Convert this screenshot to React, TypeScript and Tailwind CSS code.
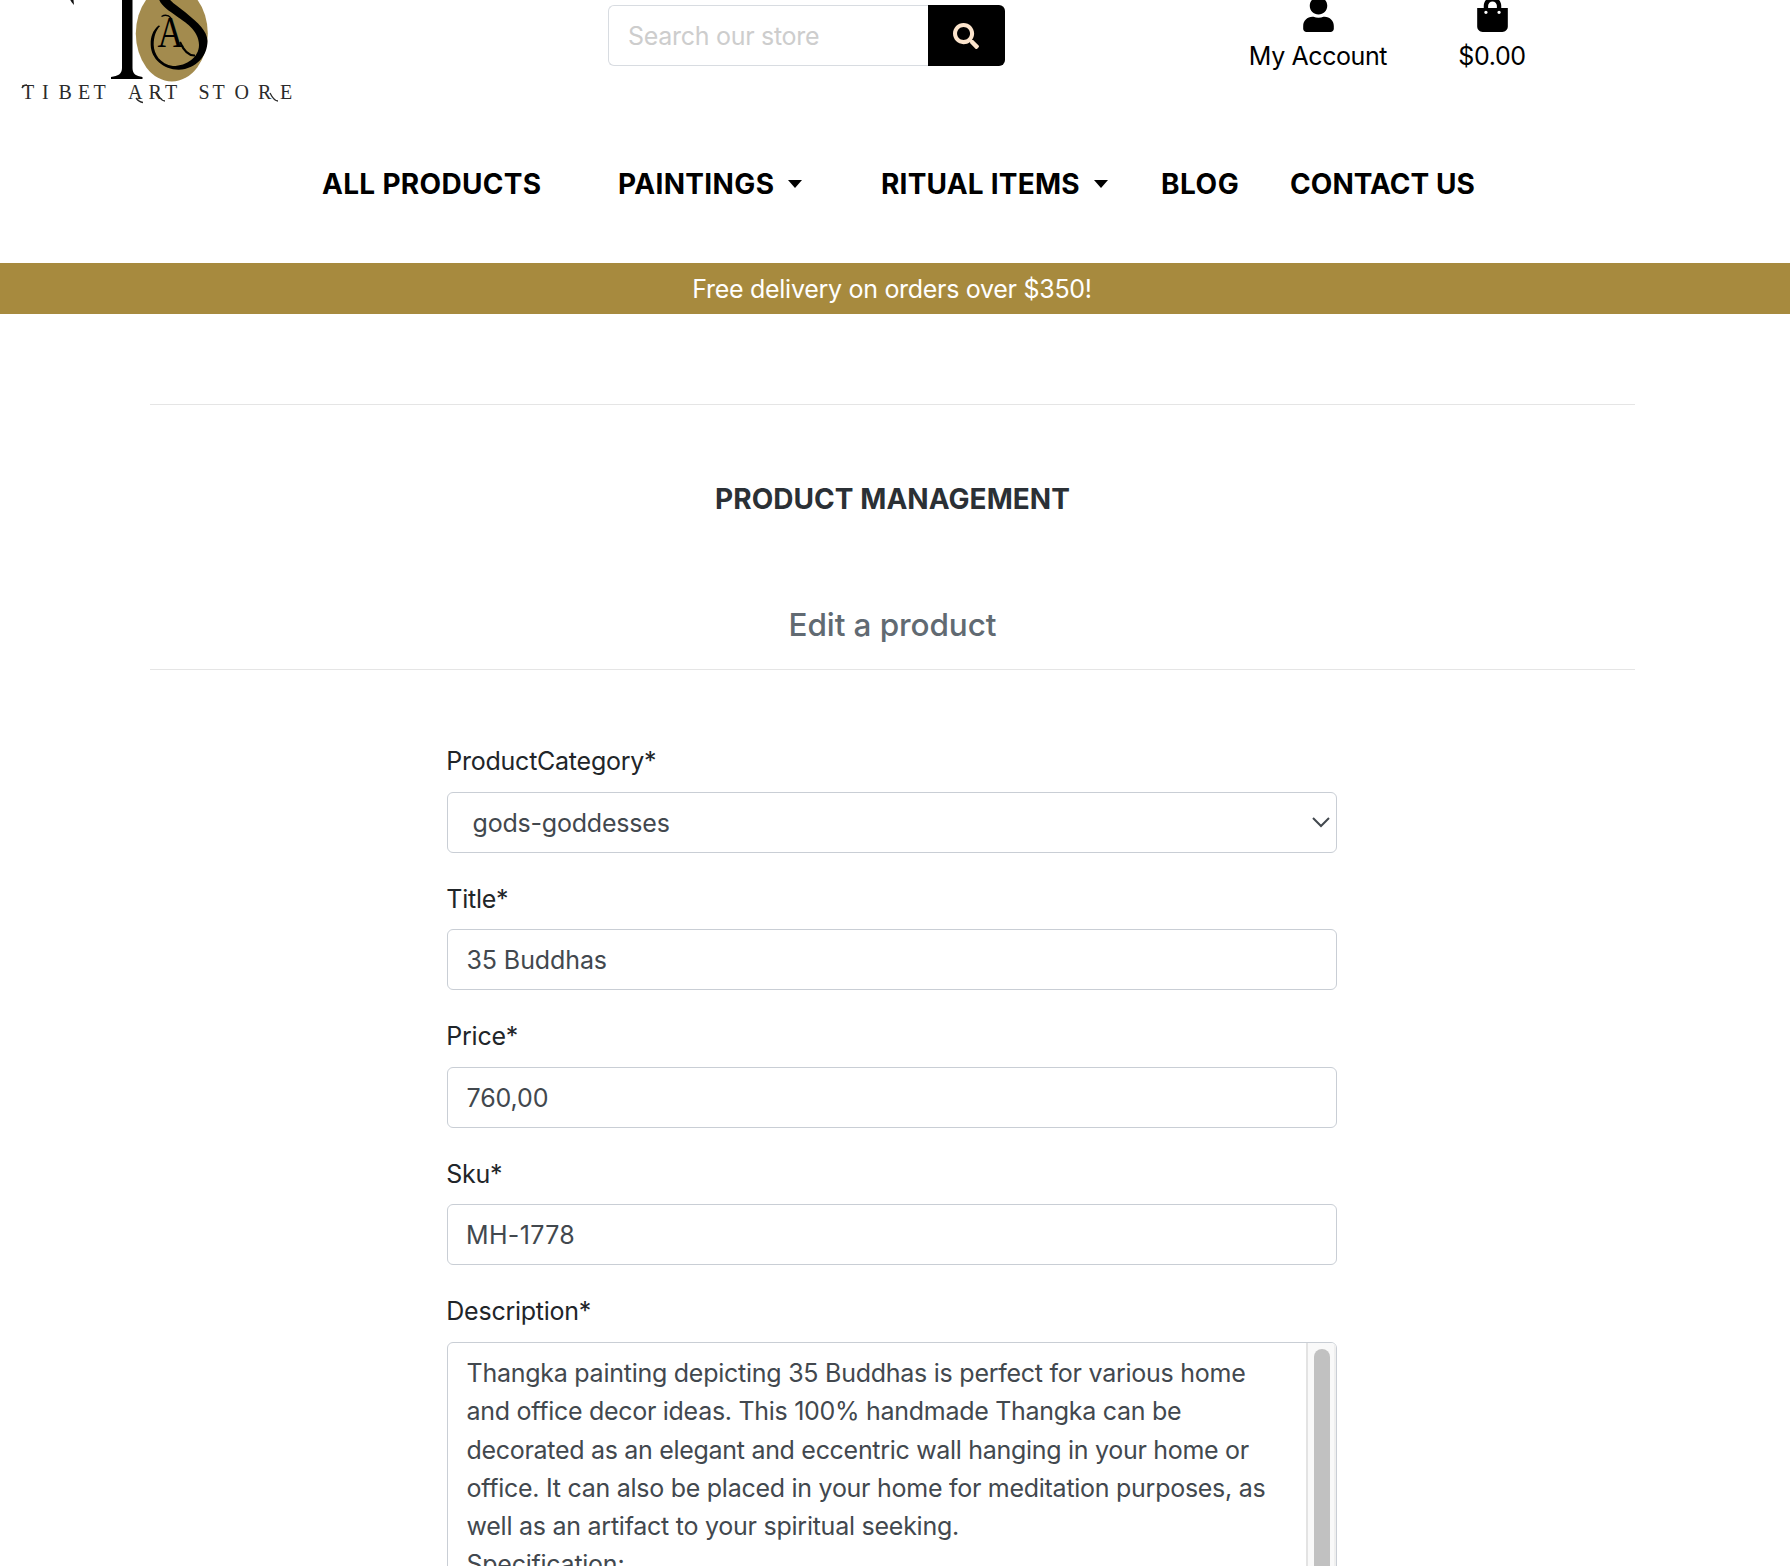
import React from 'react';
import { FaSearch, FaShoppingBag, FaUser } from 'react-icons/fa';

const wordmark = 'TIBET ART STORE';
const wordmarkX = '22 42 58.5 78 93.5 110 128 148.5 165 182 198.5 212.5 234.5 258 280';

function Logo() {
  return (
    <svg width="320" height="112" viewBox="0 0 320 112" className="block shrink-0" fontFamily="Liberation Serif, serif">
      <ellipse cx="171.8" cy="33.5" rx="36" ry="48" fill="#a38b4e" />
      {/* ornamental column with its base and upper finial */}
      <path d="M69 -2 C71 1 72 3 74 5 L73.5 0 L73 -2 Z" fill="#111" />
      <path d="M122 -2 H132.5 V68 C132.5 74 136 76 142.5 77 V79 H111 V77 C118 76 122 74 122 68 Z" fill="#000" />
      {/* swash crossing the golden oval */}
      <path
        d="M158.5 -2 C161 6 168 10 177 16.5 C184 21.5 199 30 199 45 C199 57 187 66 173 66 C160 64 154 54 153.7 45 C153.6 37 156 30 160.2 26 L158.5 25.5 C152 31 150.5 38 150.7 45 C151 59 164 70 179 69.7 C196 69 207.5 56 207.5 41 C207 31 199 23.5 185 12 C179 7 173 4 168.5 -2 Z"
        fill="#000"
      />
      <text transform="translate(157.5 46.5) scale(0.82 1)" fontSize="44" fill="#000">
        A
      </text>
      <path d="M161.5 16.5 Q167 13.5 171 18" fill="none" stroke="#000" strokeWidth="1.4" />
      <path d="M180 42 Q186 56 195 55.5" fill="none" stroke="#000" strokeWidth="2" />
      <text x={wordmarkX} y="98.5" fontSize="20" fill="#2b2b2b">
        {wordmark}
      </text>
      <path
        d="M136 98 q3 4 7 4.5 M157 93 q4 8 8 8 M270 93 q4 8 8 8 M22 88 q1 -3 5 -3"
        fill="none"
        stroke="#2b2b2b"
        strokeWidth="1.3"
      />
    </svg>
  );
}

function Caret() {
  return (
    <span className="h-0 w-0 border-x-[7.5px] border-t-[8px] border-x-transparent border-t-black" />
  );
}

function Header() {
  return (
    <header className="h-[263px] bg-white text-black">
      <div className="flex h-[112px] items-start">
        <Logo />
        <form className="mt-[5px] ml-[288px] flex h-[61px] w-[397px]">
          <div className="flex w-[320px] items-center rounded-l-[6px] border border-r-0 border-[#d8dce1] pt-[3px] pl-[19px] text-[25px] tracking-[-0.288px] text-[#cdcdcd]">
            Search our store
          </div>
          <button type="button" className="flex w-[77px] items-center justify-center rounded-r-[6px] bg-black pr-[2px] text-[#fce4cc]">
            <FaSearch size={26} />
          </button>
        </form>
        <a className="-mt-[3px] ml-[243px] flex w-[140px] flex-col items-center text-[25px] leading-[38px] tracking-[-0.4px] whitespace-nowrap">
          <FaUser size={35} className="mb-[5px] shrink-0" />
          My Account
        </a>
        <a className="-mt-[3px] ml-[66px] flex w-[76px] flex-col items-center text-[25px] leading-[38px] tracking-[-0.35px]">
          <FaShoppingBag size={35} className="mb-[5px] shrink-0" />
          $0.00
        </a>
      </div>
      <nav className="mt-[51px] ml-[322px] flex h-[42px] items-center text-[28px] font-bold whitespace-nowrap">
        <a className="w-[296px] tracking-[0.3px]">ALL PRODUCTS</a>
        <a className="flex w-[263px] items-center gap-[14px] tracking-[0.35px]">
          PAINTINGS <Caret />
        </a>
        <a className="flex w-[280px] items-center gap-[14px] tracking-[0.21px]">
          RITUAL ITEMS <Caret />
        </a>
        <a className="w-[129px] tracking-[0.5px]">BLOG</a>
        <a className="tracking-[0.05px]">CONTACT US</a>
      </nav>
    </header>
  );
}

function Label({ children }: { children: React.ReactNode }) {
  return <div className="mb-[11px] -ml-[0.7px] h-[38.4px] text-[25px] leading-[38.4px] tracking-[-0.25px] text-[#212529]">{children}</div>;
}

const boxClass = 'flex h-[61px] items-center rounded-[6px] border border-[#c9ced5] bg-white pt-[3px] text-[25px] text-[#42484e]';

function Field({ label, children }: { label: string; children: React.ReactNode }) {
  return (
    <div className="mb-[27.1px]">
      <Label>{label}</Label>
      {children}
    </div>
  );
}

export default function App() {
  return (
    <div className="h-[1566px] w-[1790px] overflow-hidden bg-white font-[Inter,sans-serif]">
      <Header />
      <div className="flex h-[51px] items-center justify-center bg-[#a78a3e] pt-[2px] pr-[6px] text-[25px] tracking-[-0.29px] text-white">
        Free delivery on orders over $350!
      </div>
      <main className="ml-[150px] w-[1485px]">
        <div className="mt-[90px] border-t border-[#e5e5e5]" />
        <h1 className="mt-[73px] text-center text-[28px] leading-[42px] font-bold tracking-[0.05px] text-[#2b3035]">
          PRODUCT MANAGEMENT
        </h1>
        <h2 className="mt-[85px] text-center text-[31.5px] leading-[40px] font-medium tracking-[-0.1px] text-[#616a72]">
          Edit a product
        </h2>
        <div className="mt-[24px] border-t border-[#e5e5e5]" />
        <div className="mt-[72.3px] ml-[297px] w-[890px]">
          <Field label="ProductCategory*">
            <div className={`${boxClass} justify-between pr-[6px] pl-[24.5px] tracking-[-0.2px]`}>
              gods-goddesses
              <svg width="18" height="11" viewBox="0 0 18 11" className="mb-[3px]">
                <path d="M1 1 L9 9 L17 1" fill="none" stroke="#42484e" strokeWidth="2" />
              </svg>
            </div>
          </Field>
          <Field label="Title*">
            <div className={`${boxClass} pl-[18.5px] tracking-[-0.1px]`}>35 Buddhas</div>
          </Field>
          <Field label="Price*">
            <div className={`${boxClass} pl-[18.5px] tracking-[-0.1px]`}>760,00</div>
          </Field>
          <Field label="Sku*">
            <div className={`${boxClass} pl-[18px] tracking-[0.35px]`}>MH-1778</div>
          </Field>
          <Field label="Description*">
            <div className="flex h-[400px] justify-between overflow-hidden rounded-[6px] border border-[#c9ced5] text-[25px] leading-[38.2px] whitespace-nowrap text-[#42484e]">
              <div className="pt-[11.5px] pl-[18.5px]">
                <div className="tracking-[-0.255px]">Thangka painting depicting 35 Buddhas is perfect for various home</div>
                <div className="tracking-[-0.288px]">and office decor ideas. This 100% handmade Thangka can be</div>
                <div className="tracking-[-0.3px]">decorated as an elegant and eccentric wall hanging in your home or</div>
                <div className="tracking-[-0.27px]">office. It can also be placed in your home for meditation purposes, as</div>
                <div className="tracking-[-0.25px]">well as an artifact to your spiritual seeking.</div>
                <div className="tracking-[-0.25px]">Specification:</div>
              </div>
              <div className="flex w-[30px] justify-center border-r-2 border-l-2 border-r-[#efefef] border-l-[#e3e3e3] bg-[#f9f9f9] pt-[6px] pl-[1px]">
                <div className="h-[500px] w-[16px] shrink-0 rounded-full bg-[#c1c1c1]" />
              </div>
            </div>
          </Field>
        </div>
      </main>
    </div>
  );
}
